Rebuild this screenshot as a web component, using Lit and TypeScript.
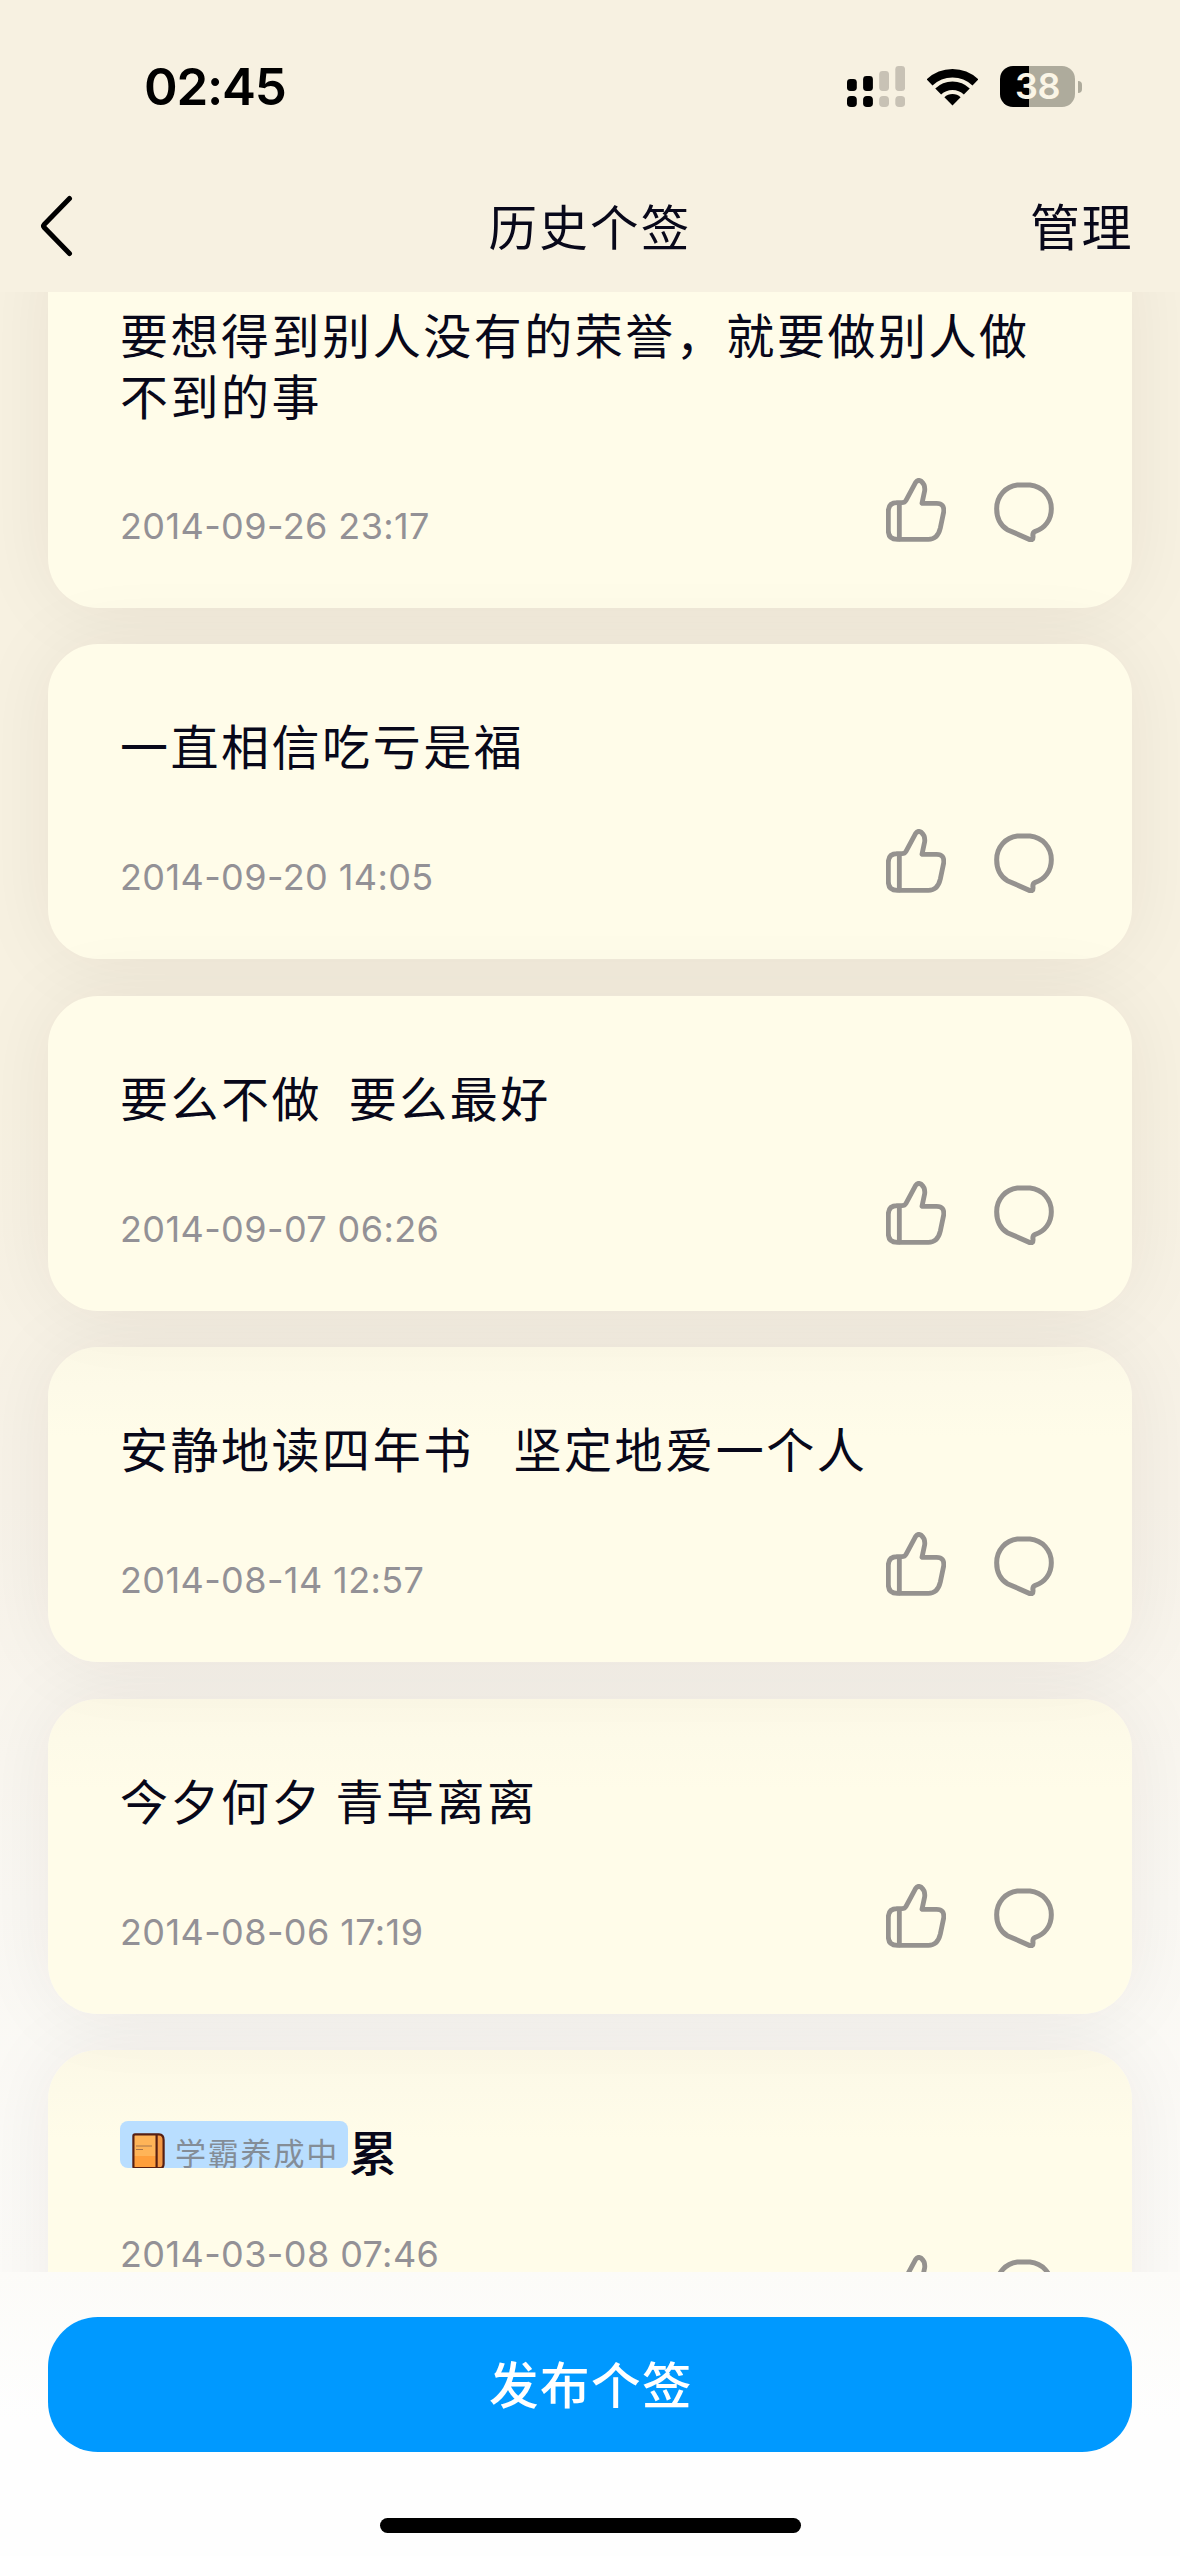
import { LitElement, html, css, svg } from "lit";
import { customElement, property } from "lit/decorators.js";
import { classMap } from "lit/directives/class-map.js";

interface Signature {
  text: string;
  date: string;
  tag?: string;
  shaded?: boolean;
}

const SIGNATURES: Signature[] = [
  { text: "要想得到别人没有的荣誉，就要做别人做不到的事", date: "2014-09-26 23:17" },
  { text: "一直相信吃亏是福", date: "2014-09-20 14:05" },
  { text: "要么不做  要么最好", date: "2014-09-07 06:26" },
  { text: "安静地读四年书   坚定地爱一个人", date: "2014-08-14 12:57", shaded: true },
  { text: "今夕何夕 青草离离", date: "2014-08-06 17:19", shaded: true },
  { text: "累", date: "2014-03-08 07:46", tag: "学霸养成中", shaded: true },
];

@customElement("status-bar")
export class StatusBar extends LitElement {
  static styles = css`
    :host {
      display: flex;
      justify-content: space-between;
      align-items: center;
      height: 41px;
      padding: 66px 98px 0 144px;
      color: #000;
      font-family: Inter, "Liberation Sans", sans-serif;
    }
    .time {
      font-size: 51px;
      line-height: 41px;
      font-weight: 600;
      letter-spacing: -1.2px;
    }
    .icons {
      display: flex;
      align-items: center;
    }
    .signal {
      display: block;
      margin-right: 22px;
    }
    .wifi {
      display: block;
      margin-right: 22px;
    }
    .battery {
      display: flex;
      align-items: center;
      justify-content: center;
      width: 75px;
      height: 41px;
      border-radius: 13px;
      background: linear-gradient(90deg, #000 39%, #aeab9c 39%);
      color: #faf5e6;
      font-size: 36px;
      line-height: 41px;
      font-weight: 600;
      letter-spacing: -0.5px;
    }
    .nub {
      width: 4px;
      height: 12px;
      margin-left: 3px;
      border-radius: 0 6px 6px 0;
      background: #aeab9c;
    }
  `;

  render() {
    const heights = [12, 15, 20, 25];
    return html`
      <div class="time">02:45</div>
      <div class="icons">
        <svg class="signal" width="58" height="41" viewBox="0 0 58 41">
          ${heights.map(
            (h, i) => svg`
              <rect x=${i * 16.1} y=${25 - h} width="9.8" height=${h} rx="3.4" fill=${i < 2 ? "#000" : "#c8c2b5"} />
              <rect x=${i * 16.1} y="30" width="9.8" height="11" rx="3.8" fill=${i < 2 ? "#000" : "#c8c2b5"} />`
          )}
        </svg>
        <svg class="wifi" width="51" height="41" viewBox="0 0 51 41">
          <g fill="none" stroke="#000" stroke-width="8.4">
            <path d="M2.6 16.4A33.2 33.2 0 0 1 48.4 16.4" />
            <path d="M11.2 25.6A20.4 20.4 0 0 1 39.8 25.6" />
          </g>
          <path d="M17.4 31.2A11.6 11.6 0 0 1 33.6 31.2L25.5 39.4Z" />
        </svg>
        <div class="battery">38</div>
        <div class="nub"></div>
      </div>
    `;
  }
}

@customElement("signature-card")
export class SignatureCard extends LitElement {
  @property({ attribute: false }) item!: Signature;

  static styles = css`
    :host {
      display: block;
      position: relative;
    }
    .card {
      box-sizing: border-box;
      min-height: 315px;
      padding: 70px 78px 66px 72px;
      border-radius: 50px;
      background: #fffce9;
      box-shadow: 0 0 80px rgba(50, 30, 25, 0.066);
      display: flex;
      flex-direction: column;
      justify-content: space-between;
      gap: 53px;
    }
    .card.shaded {
      background: linear-gradient(180deg, #fcf8e6 0, #fdfae8 40px, #fffce9 90px);
    }
    .card.tagged {
      min-height: 335px;
    }
    .text {
      min-height: 61px;
      margin-right: -5px;
      font-size: 48px;
      line-height: 61px;
      letter-spacing: 2.53px;
      color: #08081a;
      white-space: pre-wrap;
    }
    .tagged .text {
      display: flex;
      align-items: center;
      font-weight: 500;
    }
    .tag {
      box-sizing: border-box;
      display: flex;
      align-items: flex-start;
      width: 228px;
      height: 47px;
      margin: -11px 1px 0 0;
      padding: 12px 0 0 12px;
      border-radius: 8px;
      overflow: hidden;
      background: #b9deff;
      color: #848d97;
      font-size: 31px;
      line-height: 42px;
      letter-spacing: 1.8px;
      font-weight: 400;
    }
    .book {
      display: block;
      flex: none;
      margin-right: 10px;
    }
    .tag-label {
      margin-top: -2px;
      white-space: nowrap;
    }
    .footer {
      display: flex;
      justify-content: space-between;
      align-items: flex-end;
      height: 64px;
    }
    .date {
      font-size: 36px;
      line-height: 40px;
      letter-spacing: 0.4px;
      color: #939196;
      font-family: Inter, "Liberation Sans", sans-serif;
      margin-bottom: -4px;
    }
    .tagged .date {
      align-self: flex-start;
      margin-top: -21px;
    }
    .actions {
      display: flex;
      align-items: flex-end;
      gap: 48px;
    }
    .actions svg {
      display: block;
      fill: none;
      stroke: #95928f;
      stroke-linecap: round;
      stroke-linejoin: round;
    }
  `;

  render() {
    const { text, date, tag, shaded } = this.item;
    return html`
      <article class=${classMap({ card: true, tagged: !!tag, shaded: !!shaded })}>
        <div class="text">${tag ? this.renderTag(tag) : ""}<span>${text}</span></div>
        <div class="footer">
          <div class="date">${date}</div>
          <div class="actions">
            <svg width="60" height="64" viewBox="78 54 180 192" stroke-width="14.5">
              <path
                d="M110 128H126Q134 128 138 121L167 67Q174 57 184 64Q196 74 194 92L186 130H230Q254 130 251 156L241 204Q233 238 205 238H112Q85 238 85 212V154Q85 128 112 128"
              />
              <path d="M118 130V237" />
            </svg>
            <svg width="60" height="60" viewBox="403 66 178 180" stroke-width="15">
              <path
                d="M472 75H510C547 79 574 108 574 146C574 180 554 205 526 214Q517 218 519 229Q520 243 508 238L442 209C420 195 410 172 410 146C410 108 437 79 472 75Z"
              />
            </svg>
          </div>
        </div>
      </article>
    `;
  }

  private renderTag(label: string) {
    return html`<span class="tag"
      ><svg class="book" width="33" height="37" viewBox="0 0 33 37">
        <path d="M3 1.3H27Q31.6 1.3 31.6 7V31Q31.6 35.2 28 35.2H3Q1.4 35.2 1.4 33.4V3Q1.4 1.3 3 1.3Z" fill="#ffb458" />
        <path d="M2 23H25V35H2Z" fill="#ff9f3c" />
        <path d="M24.5 1.5H27Q31.6 1.5 31.6 7V31Q31.6 35 28 35H24.5Z" fill="#f59a45" />
        <path
          d="M3 1.3H27Q31.6 1.3 31.6 7V31Q31.6 35.2 28 35.2H3Q1.4 35.2 1.4 33.4V3Q1.4 1.3 3 1.3ZM24.6 1.5V35"
          fill="none"
          stroke="#571f12"
          stroke-width="2.2"
        />
        <path d="M4 13H20M4 16.5H11" stroke="#a8744a" stroke-width="1" />
      </svg><span class="tag-label">${label}</span></span
    >`;
  }
}

@customElement("app-root")
export class AppRoot extends LitElement {
  static styles = css`
    :host {
      display: block;
      font-family: "Noto Sans CJK SC", sans-serif;
    }
    .screen {
      display: flex;
      flex-direction: column;
      width: 1180px;
      height: 2556px;
      overflow: hidden;
      background: linear-gradient(
        180deg,
        #f7f1e1 0,
        #f7f1e1 1100px,
        #f7f2e8 1500px,
        #faf8f3 1900px,
        #fcfbf8 2272px,
        #fefefe 2420px
      );
    }
    .nav {
      display: grid;
      grid-template-columns: 1fr auto 1fr;
      align-items: center;
      height: 185px;
      box-sizing: border-box;
      padding: 76px 48px 23px 48px;
      color: #08081a;
      font-size: 48.5px;
      line-height: 70px;
      letter-spacing: 2.2px;
    }
    .back {
      display: block;
      margin-left: -10px;
    }
    .title {
      margin-top: -2px;
      font-weight: 400;
    }
    .manage {
      justify-self: end;
      margin-right: -1px;
      margin-top: -4px;
      font-size: 50px;
      letter-spacing: 1.5px;
    }
    .viewport {
      height: 1980px;
      overflow: hidden;
    }
    .list {
      display: flex;
      flex-direction: column;
      gap: 36.4px;
      margin-top: -59px;
      padding: 0 48px;
    }
    .list signature-card:nth-child(2) {
      z-index: 2;
    }
    .list signature-card:nth-child(3) {
      z-index: 5;
    }
    .list signature-card:nth-child(4) {
      z-index: 4;
    }
    .list signature-card:nth-child(5) {
      z-index: 3;
    }
    .bottom {
      display: flex;
      flex-direction: column;
      align-items: center;
      padding: 45px 48px 0;
    }
    .publish {
      display: flex;
      align-items: center;
      justify-content: center;
      align-self: stretch;
      height: 135px;
      border: 0;
      padding: 0 0 4px 2px;
      border-radius: 50px;
      background: #0099ff;
      color: #fff;
      font: 500 49.5px/70px "Noto Sans CJK SC", sans-serif;
      letter-spacing: 1.5px;
    }
    .home {
      width: 421px;
      height: 15px;
      margin-top: 66px;
      border-radius: 8px;
      background: #000;
    }
  `;

  render() {
    return html`
      <div class="screen">
        <status-bar></status-bar>
        <header class="nav">
          <svg class="back" width="38" height="64" viewBox="0 0 38 64">
            <path
              d="M31.5 4.5L6.2 30.5Q4.8 32 6.2 33.5L31.5 59.5"
              fill="none"
              stroke="#000"
              stroke-width="5"
              stroke-linecap="round"
              stroke-linejoin="round"
            />
          </svg>
          <div class="title">历史个签</div>
          <div class="manage">管理</div>
        </header>
        <main class="viewport">
          <div class="list">
            ${SIGNATURES.map((item) => html`<signature-card .item=${item}></signature-card>`)}
          </div>
        </main>
        <footer class="bottom">
          <button class="publish">发布个签</button>
          <div class="home"></div>
        </footer>
      </div>
    `;
  }
}
